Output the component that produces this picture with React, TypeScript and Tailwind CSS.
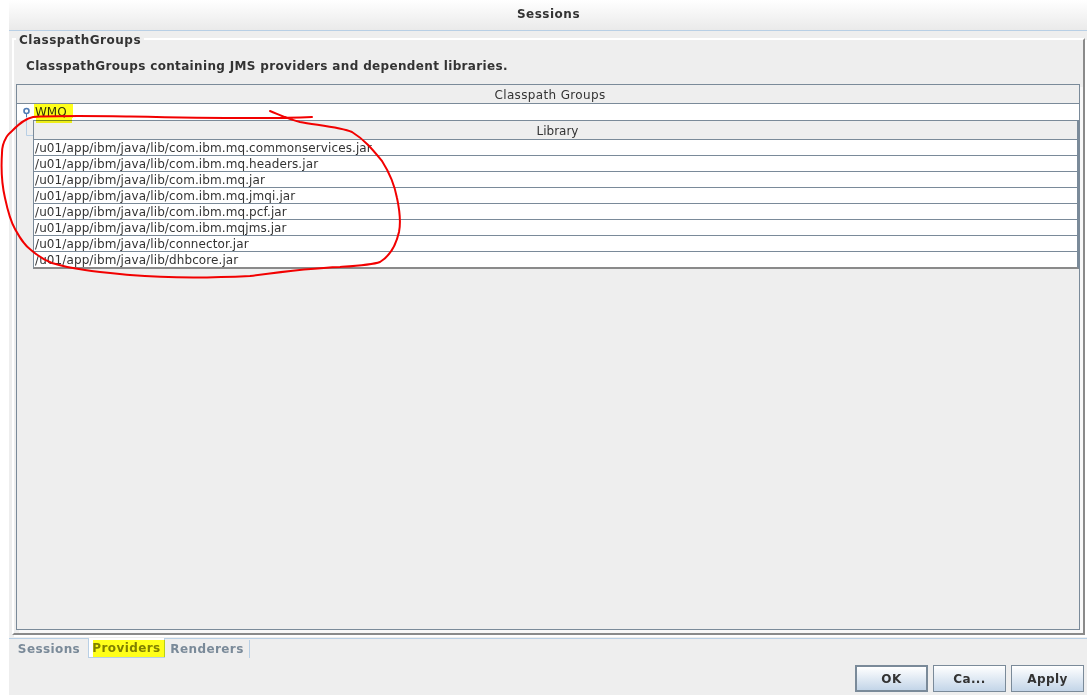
import React from "react";

const jars = [
  "/u01/app/ibm/java/lib/com.ibm.mq.commonservices.jar",
  "/u01/app/ibm/java/lib/com.ibm.mq.headers.jar",
  "/u01/app/ibm/java/lib/com.ibm.mq.jar",
  "/u01/app/ibm/java/lib/com.ibm.mq.jmqi.jar",
  "/u01/app/ibm/java/lib/com.ibm.mq.pcf.jar",
  "/u01/app/ibm/java/lib/com.ibm.mqjms.jar",
  "/u01/app/ibm/java/lib/connector.jar",
  "/u01/app/ibm/java/lib/dhbcore.jar",
];

function DialogButton({ label, active }: { label: string; active?: boolean }) {
  return (
    <button
      className={`w-[73px] h-[27px] flex items-center justify-center bg-gradient-to-b from-white to-[#c3d5e8] text-[12px] font-bold text-[#333333] tracking-[0.4px] ${
        active ? "border-[2px] border-[#7a8a99]" : "border border-[#7a8a99]"
      }`}
    >
      {label}
    </button>
  );
}

export default function App() {
  return (
    <div className="relative w-[1087px] h-[695px] overflow-hidden bg-white pl-[9px] font-['DejaVu_Sans',sans-serif] text-[#333333]">
      <div className="flex flex-col h-full bg-[#eeeeee]">
        {/* title bar */}
        <div className="h-[31px] shrink-0 flex items-center justify-center bg-gradient-to-b from-white to-[#eaeaea] border-b border-[#b8cfe5] text-[12px] font-bold tracking-[0.5px] pb-[2px] pl-[1px]">
          Sessions
        </div>

        {/* titled panel */}
        <div className="relative h-[607px] shrink-0 pl-[3px] pr-[2px] pt-[7px] pb-[3px]">
          <div className="h-full border-t-2 border-l-2 border-white border-r-2 border-r-[#8a8a8a] border-b-2 border-b-[#8a8a8a] shadow-[2px_2px_0_#ffffff] pl-[2px] pr-[3px] flex flex-col">
            <div className="h-[44px] shrink-0 pl-[10px] pt-[17px] text-[12px] font-bold tracking-[0.34px] leading-[18px]">
              ClasspathGroups containing JMS providers and dependent libraries.
            </div>
            <div className="h-[546px] shrink-0 border border-[#7a8a99] shadow-[3px_3px_0_#f8f8f8] flex flex-col">
              <div className="h-[19px] shrink-0 flex items-center justify-center border-b border-[#7a8a99] text-[12px] leading-none tracking-[0.35px] pl-[4px] pt-[1px]">
                Classpath Groups
              </div>
              <div className="h-[16px] shrink-0 bg-white flex items-center pl-[18px] text-[12px] leading-none">
                WMQ
              </div>
              <div className="ml-[16px] border-t border-l border-[#7a8a99] border-r-2 border-r-[#7a8a99] border-b-2 border-b-[#8a8a8a]">
                <div className="h-[19px] flex items-center justify-center border-b border-[#7a8a99] text-[12px] leading-none pl-[4px] pt-[1px]">
                  Library
                </div>
                {jars.map((jar, i) => (
                  <div
                    key={jar}
                    className={`bg-white flex items-center pl-[1px] text-[12px] leading-none tracking-[0.1px] ${
                      i < jars.length - 1 ? "h-[16px] border-b border-[#7a8a99]" : "h-[15px]"
                    }`}
                  >
                    {jar}
                  </div>
                ))}
              </div>
            </div>
          </div>
          <div className="absolute left-[7px] top-[2px] h-[15px] bg-[#eeeeee] px-[3px] text-[12px] font-bold tracking-[0.5px] leading-[15px]">
            ClasspathGroups
          </div>
        </div>

        {/* tabs */}
        <div className="h-[20px] shrink-0 flex items-start border-t border-[#b8cfe5] text-[12px] font-bold tracking-[0.4px] text-[#7a8a99]">
          <div className="h-[19px] w-[79px] flex items-center justify-center pl-[1px]">Sessions</div>
          <div className="h-[20px] w-[77px] -mt-px flex items-center justify-center bg-white border-x border-b border-[#b8cfe5] text-[#808000]">
            Providers
          </div>
          <div className="h-[18px] w-[85px] mt-[1px] flex items-center justify-center border-r border-[#b8cfe5]">
            Renderers
          </div>
        </div>

        {/* buttons */}
        <div className="flex justify-end gap-[5px] pt-[7px] pr-[3px]">
          <DialogButton label="OK" active />
          <DialogButton label="Ca..." />
          <DialogButton label="Apply" />
        </div>
      </div>

      {/* tree handle */}
      <svg className="absolute left-[20px] top-[106px]" width="14" height="32" viewBox="0 0 14 32" fill="none">
        <path d="M6.5 11V29.5H13" stroke="#b8cfe5" />
        <path d="M6.5 8V11" stroke="#4f7cb5" />
        <circle cx="6.5" cy="5" r="2.5" stroke="#4f7cb5" strokeWidth="1.6" fill="#ffffff" />
      </svg>

      {/* highlighter marks */}
      <div className="absolute left-[34px] top-[104px] w-[39px] h-[14px] bg-[#ffff1a] mix-blend-multiply" />
      <div className="absolute left-[36px] top-[118px] w-[36px] h-[5px] bg-[#ffff1a] mix-blend-multiply" />
      <div className="absolute left-[93px] top-[640px] w-[72px] h-[17px] bg-[#ffff1a] mix-blend-multiply" />

      {/* red annotation */}
      <svg className="absolute left-0 top-0 pointer-events-none" width="1087" height="695" viewBox="0 0 1087 695" fill="none">
        <path
          d="M312 117C270 119 200 118 130 116.5C90 116 55 115.5 33 117C24 119 18 125 13 130C10 133 7 135 6 138C3 143 2 147 2 153C1 168 2 185 5 198C8 212 11 222 15 229C20 238 24 245 31 250C38 256 44 260 52 263C75 270 100 272 130 275C165 278 210 278 250 276C280 272 310 268 340 267C355 266 372 265 380 262C390 256 396 245 399 232C401 222 400 212 397 198C394 182 389 172 382 161C373 150 365 140 352 132C340 127 315 125 300 122C288 119 280 115 270 111"
          stroke="#f20000"
          strokeWidth="2"
          strokeLinecap="round"
          strokeLinejoin="round"
        />
      </svg>
    </div>
  );
}
